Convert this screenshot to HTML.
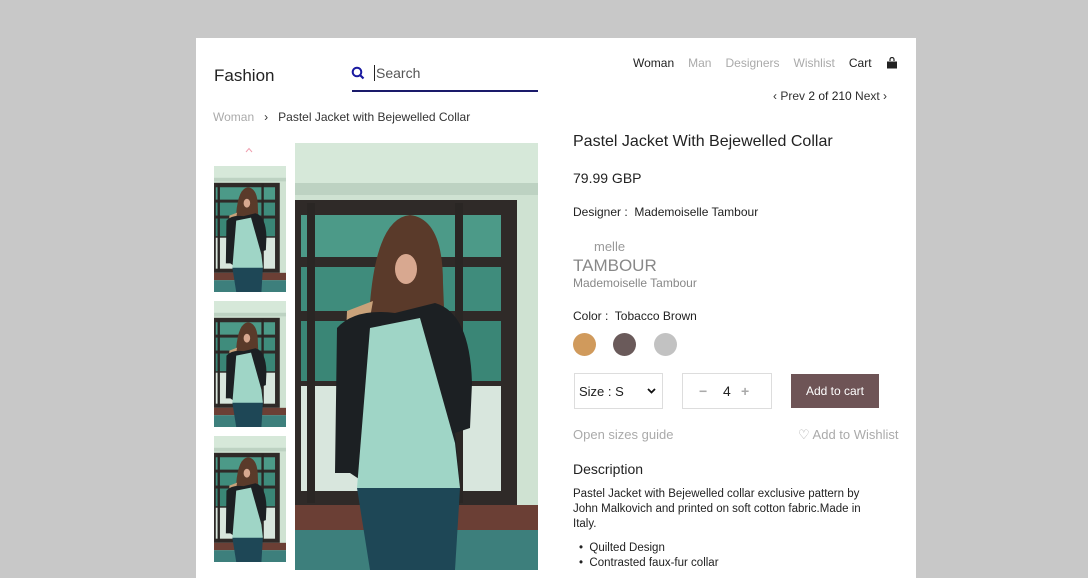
<!DOCTYPE html>
<html><head><meta charset="utf-8"><style>
*{margin:0;padding:0;box-sizing:border-box}
body{width:1088px;height:570px;background:#c8c8c8;font-family:"Liberation Sans",sans-serif;position:relative;overflow:hidden;color:#222}
.card{position:absolute;left:196px;top:38px;width:720px;height:540px;background:#fff}
.a{position:absolute;white-space:nowrap}
.g{color:#aaa}
</style></head><body>
<svg width="0" height="0" style="position:absolute">
<defs><symbol id="ph" viewBox="0 0 243 427" preserveAspectRatio="none">
<rect width="243" height="427" fill="#cfe2d2"/>
<rect x="0" y="0" width="243" height="40" fill="#d6e8d9"/>
<rect x="0" y="40" width="243" height="12" fill="#bdd2c2"/>
<rect x="0" y="57" width="222" height="305" fill="#2f2a28"/>
<rect x="6" y="72" width="200" height="42" fill="#4c9a88"/>
<rect x="6" y="124" width="200" height="44" fill="#3f8c7c"/>
<rect x="6" y="178" width="200" height="60" fill="#3a8676"/>
<rect x="6" y="243" width="200" height="105" fill="#d8e6dd"/>
<rect x="12" y="60" width="8" height="300" fill="#2a2624"/>
<rect x="160" y="60" width="8" height="300" fill="#2a2624"/>
<rect x="0" y="362" width="243" height="25" fill="#6b3f35"/>
<rect x="0" y="387" width="243" height="40" fill="#3d7f7c"/>
<path d="M75 160 Q82 75 115 72 Q148 76 148 140 L150 190 L70 220 Z" fill="#5a3a2a"/>
<path d="M52 168 L78 158 L66 225 L50 215 Z" fill="#c9a27a"/>
<ellipse cx="111" cy="126" rx="11" ry="15" fill="#d8a890"/>
<path d="M42 185 Q60 165 100 170 L140 160 Q175 170 177 240 L175 285 L160 290 L165 340 L70 340 L55 330 L40 330 Z" fill="#1c2023"/>
<path d="M75 185 L125 175 L160 300 L165 345 Q120 355 62 345 Z" fill="#9fd5c6"/>
<path d="M62 345 L165 345 L160 427 L75 427 Z" fill="#1e4756"/>
</symbol></defs></svg>
<div class="card">
<div class="a" style="left:18px;top:28px;font-size:17px;color:#222">Fashion</div>
<svg class="a" style="left:155px;top:28px" width="14" height="14" viewBox="0 0 14 14"><circle cx="6" cy="6" r="4.3" fill="none" stroke="#1a1aa0" stroke-width="2"/><path d="M9 9l3.5 3.5" stroke="#1a1aa0" stroke-width="2.2"/></svg>
<div class="a" style="left:178px;top:27px;font-size:14px;color:#555;border-left:1px solid #222;padding-left:1px">Search</div>
<div class="a" style="left:156px;top:52px;width:186px;height:1.5px;background:#1a1a6a"></div>
<div class="a" style="left:437px;top:18px;font-size:12px"><span>Woman</span><span class="g" style="margin-left:14px">Man</span><span class="g" style="margin-left:14px">Designers</span><span class="g" style="margin-left:14px">Wishlist</span><span style="margin-left:14px">Cart</span></div>
<svg class="a" style="left:690px;top:19px" width="12" height="12" viewBox="0 0 12 12"><path d="M4 4V2.5a2 2 0 014 0V4" fill="none" stroke="#222" stroke-width="1.2"/><rect x="1" y="4.5" width="10" height="7" fill="#222"/></svg>
<div class="a" style="left:577px;top:51px;font-size:12px;color:#333">‹ Prev <span style="color:#222">2 of 210</span> Next ›</div>
<div class="a" style="left:17px;top:72px;font-size:12px;color:#333"><span class="g">Woman</span>&nbsp;&nbsp;&nbsp;›&nbsp;&nbsp;&nbsp;Pastel Jacket with Bejewelled Collar</div>
<svg class="a" style="left:49px;top:109px" width="8" height="6" viewBox="0 0 8 6"><path d="M1 5L4 1.5L7 5" fill="none" stroke="#f0a0b0" stroke-width="1"/></svg>
<svg class="a" style="left:18px;top:128px" width="72" height="126"><use href="#ph"/></svg>
<svg class="a" style="left:18px;top:263px" width="72" height="126"><use href="#ph"/></svg>
<svg class="a" style="left:18px;top:398px" width="72" height="126"><use href="#ph"/></svg>
<svg class="a" style="left:99px;top:105px" width="243" height="427"><use href="#ph"/></svg>
<div class="a" style="left:377px;top:95px;font-size:16px;color:#222">Pastel Jacket With Bejewelled Collar</div>
<div class="a" style="left:377px;top:132px;font-size:14px">79.99 GBP</div>
<div class="a" style="left:377px;top:167px;font-size:12px">Designer :&nbsp; Mademoiselle Tambour</div>
<div class="a" style="left:398px;top:201px;font-size:13px;color:#999">melle</div>
<div class="a" style="left:377px;top:218px;font-size:17px;color:#888">TAMBOUR</div>
<div class="a" style="left:377px;top:238px;font-size:12px;color:#888">Mademoiselle Tambour</div>
<div class="a" style="left:377px;top:271px;font-size:12px">Color :&nbsp; Tobacco Brown</div>
<div class="a" style="left:377px;top:295px;width:23px;height:23px;border-radius:50%;background:#d09a5c"></div>
<div class="a" style="left:417px;top:295px;width:23px;height:23px;border-radius:50%;background:#6a5a5a"></div>
<div class="a" style="left:458px;top:295px;width:23px;height:23px;border-radius:50%;background:#c2c2c2"></div>
<div class="a" style="left:378px;top:335px;width:89px;height:36px;border:1px solid #ddd;font-size:13px;padding:10px 0 0 4px">Size : S<svg style="position:absolute;right:6px;top:14px" width="9" height="6" viewBox="0 0 9 6"><path d="M1 1l3.5 3.5L8 1" fill="none" stroke="#111" stroke-width="1.8"/></svg></div>
<div class="a" style="left:486px;top:335px;width:90px;height:36px;border:1px solid #ddd;font-size:14px;padding-top:9px"><span style="position:absolute;left:16px;color:#aaa;font-weight:bold">−</span><span style="position:absolute;left:40px">4</span><span style="position:absolute;left:58px;color:#aaa;font-weight:bold">+</span></div>
<div class="a" style="left:595px;top:336px;width:88px;height:34px;background:#6e5456;color:#fff;font-size:12px;text-align:center;line-height:34px">Add to cart</div>
<div class="a" style="left:377px;top:389px;font-size:13px;color:#aaa">Open sizes guide</div>
<div class="a" style="left:602px;top:389px;font-size:13px;color:#aaa">♡ Add to Wishlist</div>
<div class="a" style="left:377px;top:423px;font-size:14px">Description</div>
<div class="a" style="left:377px;top:449px;font-size:11.5px;line-height:15px;color:#222">Pastel Jacket with Bejewelled collar exclusive pattern by<br>John Malkovich and printed on soft cotton fabric.Made in<br>Italy.</div>
<div class="a" style="left:383px;top:503px;font-size:11.5px;line-height:15px">•&nbsp;&nbsp;Quilted Design<br>•&nbsp;&nbsp;Contrasted faux-fur collar</div>
</div>
</body></html>
